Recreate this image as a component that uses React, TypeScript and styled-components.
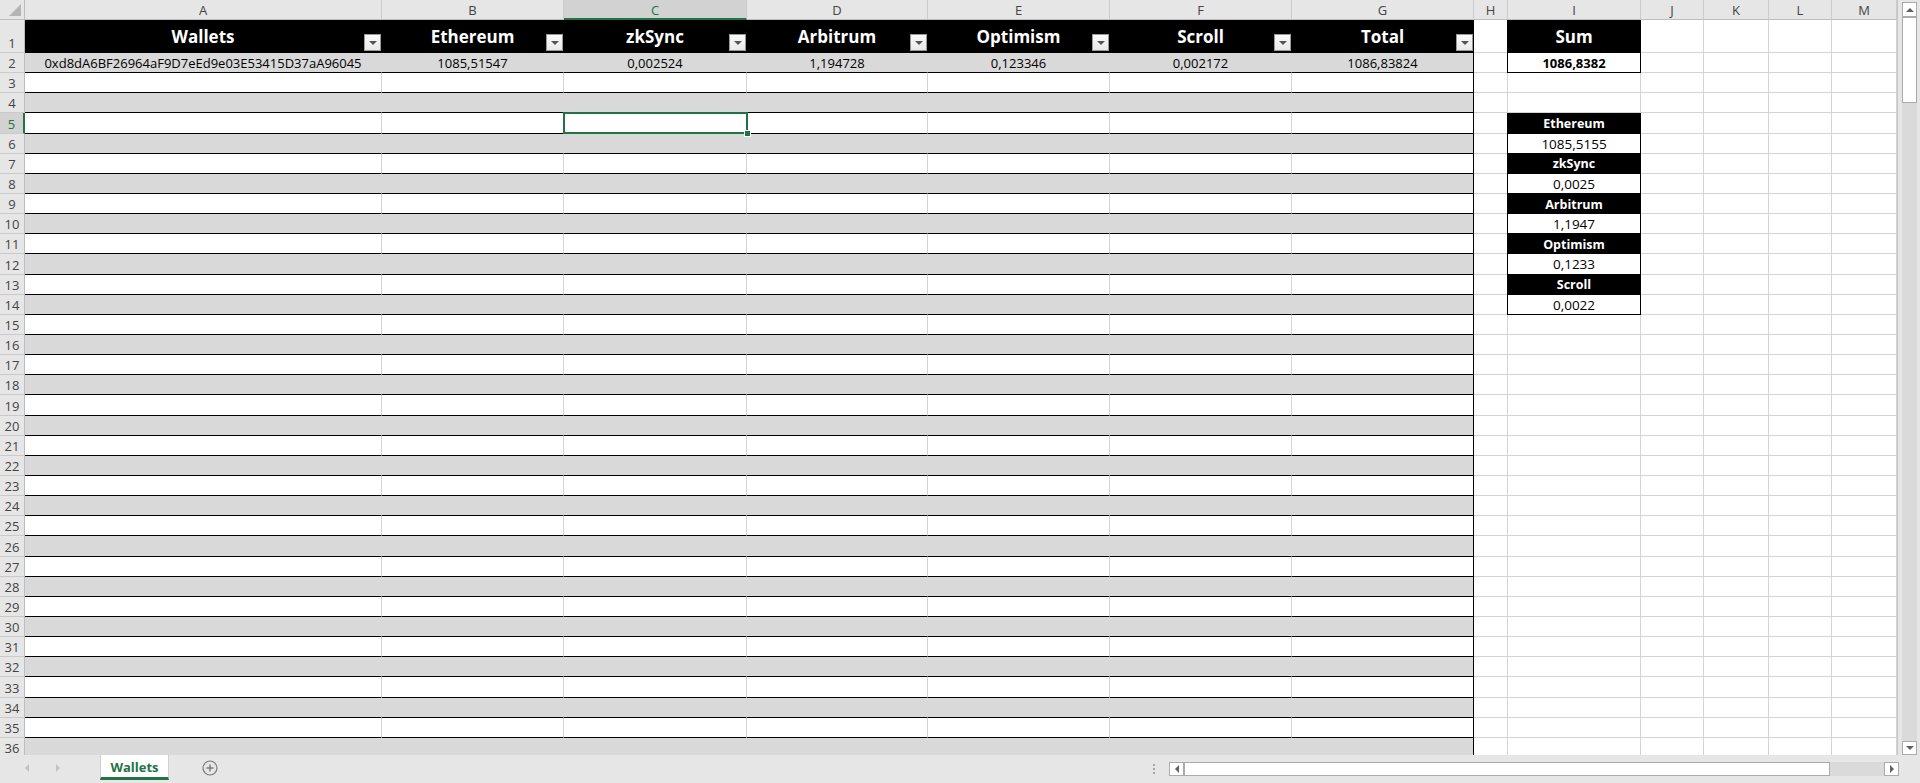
import React from "react";
import styled, { createGlobalStyle, css } from "styled-components";

const GREEN = "#217346";
const GRID = "#d4d4d4";
const BAND = "#d9d9d9";
const CHROME = "#e6e6e6";
const EDGE = "#ababab";

// column widths A..M, taken from the screenshot
const COL_WIDTHS = [357, 182, 183, 181, 182, 182, 182, 34, 133, 63, 65, 63, 65];
const LETTERS = ["A", "B", "C", "D", "E", "F", "G", "H", "I", "J", "K", "L", "M"];

const HEADERS = ["Wallets", "Ethereum", "zkSync", "Arbitrum", "Optimism", "Scroll", "Total"];
const FIRST_ROW = [
  "0xd8dA6BF26964aF9D7eEd9e03E53415D37aA96045",
  "1085,51547",
  "0,002524",
  "1,194728",
  "0,123346",
  "0,002172",
  "1086,83824",
];
const SUMMARY = [
  { name: "Ethereum", value: "1085,5155" },
  { name: "zkSync", value: "0,0025" },
  { name: "Arbitrum", value: "1,1947" },
  { name: "Optimism", value: "0,1233" },
  { name: "Scroll", value: "0,0022" },
];

const GlobalStyle = createGlobalStyle`
  html, body {
    margin: 0;
    padding: 0;
    overflow: hidden;
  }
  body {
    font-family: "Open Sans", "Liberation Sans", sans-serif;
    color: #000;
  }
  * {
    box-sizing: border-box;
  }
`;

const Window = styled.div`
  width: 1920px;
  height: 783px;
  display: flex;
  flex-direction: column;
  background: ${CHROME};
  overflow: hidden;
`;

const Main = styled.div`
  display: flex;
  height: 755px;
`;

const Sheet = styled.div`
  width: 1898px;
  height: 755px;
  overflow: hidden;
  display: grid;
  grid-template-columns: 25px ${COL_WIDTHS.map((w) => `${w}px`).join(" ")};
  grid-template-rows: 20px 33px;
  grid-auto-rows: 20.15px;
  border-right: 1px solid #c6c6c6;
  background: #fff;
  font-size: 13px;
`;

const Corner = styled.div`
  position: relative;
  background: ${CHROME};
  border-right: 1px solid #bdbdbd;
  border-bottom: 1px solid #bdbdbd;
`;

const CornerMark = styled.span`
  position: absolute;
  right: 3px;
  bottom: 3px;
  width: 12px;
  height: 12px;
  background: #b4b4b4;
  clip-path: polygon(100% 0, 100% 100%, 0 100%);
`;

const ColHead = styled.div<{ $active?: boolean }>`
  display: flex;
  align-items: center;
  justify-content: center;
  padding-top: 1px;
  background: ${(p) => (p.$active ? "#d2d2d2" : CHROME)};
  color: ${(p) => (p.$active ? GREEN : "#444")};
  border-right: 1px solid #cacaca;
  border-bottom: ${(p) => (p.$active ? `2px solid ${GREEN}` : "1px solid #bdbdbd")};
  font-size: 13px;
`;

const RowHead = styled.div<{ $active?: boolean }>`
  display: flex;
  align-items: flex-end;
  justify-content: center;
  padding-bottom: 0;
  background: ${(p) => (p.$active ? "#d2d2d2" : CHROME)};
  color: ${(p) => (p.$active ? GREEN : "#444")};
  border-right: ${(p) => (p.$active ? `2px solid ${GREEN}` : "1px solid #bdbdbd")};
  border-bottom: 1px solid #cacaca;
  font-size: 13px;
  line-height: 18px;
`;

const Cell = styled.div`
  position: relative;
  display: flex;
  align-items: center;
  justify-content: center;
  padding-top: 1px;
  white-space: nowrap;
  border-right: 1px solid ${GRID};
  border-bottom: 1px solid ${GRID};
  font-size: 13px;
`;

const HeadCell = styled(Cell)`
  background: #000;
  color: #fff;
  font-weight: 700;
  font-size: 17px;
  border-right-color: #000;
  border-bottom-color: #000;
`;

const BodyCell = styled(Cell)<{ $shaded: boolean; $edge: boolean; $selected?: boolean }>`
  background: ${(p) => (p.$shaded ? BAND : "#fff")};
  border-bottom-color: #000;
  border-right-color: ${(p) => (p.$edge ? "#000" : p.$shaded ? BAND : GRID)};
  ${(p) =>
    p.$selected &&
    css`
      z-index: 2;
    `}
`;

const SumHead = styled(Cell)<{ $large?: boolean }>`
  background: #000;
  color: #fff;
  font-weight: 700;
  font-size: ${(p) => (p.$large ? "17px" : "12.5px")};
  border-right-color: #000;
  border-bottom-color: #000;
  box-shadow: -1px 0 0 #000;
`;

const SumValue = styled(Cell)<{ $bold?: boolean }>`
  background: #fff;
  font-weight: ${(p) => (p.$bold ? 700 : 400)};
  font-size: ${(p) => (p.$bold ? "13px" : "13.5px")};
  border-right-color: #000;
  border-bottom-color: #000;
  box-shadow: -1px 0 0 #000;
`;

const FilterButton = styled.span`
  position: absolute;
  right: 0;
  bottom: 1px;
  width: 17px;
  height: 17px;
  display: flex;
  align-items: center;
  justify-content: center;
  background: linear-gradient(#fafafa, #e9e9e9);
  border: 1px solid #9a9a9a;
`;

const Selection = styled.span`
  position: absolute;
  top: -1px;
  left: -1px;
  right: -2px;
  bottom: -1px;
  border: 2px solid ${GREEN};
  pointer-events: none;
`;

const FillHandle = styled.span`
  position: absolute;
  right: -5px;
  bottom: -5px;
  width: 7px;
  height: 7px;
  background: ${GREEN};
  border: 1px solid #fff;
`;

type Dir = "up" | "down" | "left" | "right";

const Triangle = styled.span<{ $dir: Dir; $size?: number; $color?: string }>`
  display: inline-block;
  width: 0;
  height: 0;
  ${({ $dir, $size = 4, $color = "#606060" }) => {
    const t = `${$size}px solid transparent`;
    const c = `${$size}px solid ${$color}`;
    switch ($dir) {
      case "up":
        return css`border-left: ${t}; border-right: ${t}; border-bottom: ${c};`;
      case "down":
        return css`border-left: ${t}; border-right: ${t}; border-top: ${c};`;
      case "left":
        return css`border-top: ${t}; border-bottom: ${t}; border-right: ${c};`;
      default:
        return css`border-top: ${t}; border-bottom: ${t}; border-left: ${c};`;
    }
  }}
`;

/* vertical scrollbar */

const VScroll = styled.div`
  width: 22px;
  padding: 2px 3px 0 4px;
  display: flex;
  flex-direction: column;
`;

const ScrollBox = styled.div<{ $size: number }>`
  flex: 0 0 ${(p) => p.$size}px;
  display: flex;
  align-items: center;
  justify-content: center;
  background: #fff;
  border: 1px solid ${EDGE};
`;

const ScrollTrack = styled.div`
  flex: 1;
  background: #dadada;
`;

/* sheet tabs + horizontal scrollbar */

const TabBar = styled.div`
  display: flex;
  align-items: flex-start;
  height: 28px;
  background: ${CHROME};
`;

const NavArrows = styled.div`
  width: 100px;
  height: 25px;
  display: flex;
  align-items: center;
  gap: 27px;
  padding-left: 25px;
`;

const SheetTab = styled.div`
  width: 69px;
  height: 25px;
  display: flex;
  align-items: center;
  justify-content: center;
  padding-top: 1px;
  background: #fff;
  color: ${GREEN};
  font-weight: 700;
  font-size: 13px;
  border-left: 1px solid #d0d0d0;
  border-right: 1px solid #d0d0d0;
  border-bottom: 3px solid ${GREEN};
`;

const AddSheet = styled.span`
  margin: 5px 0 0 33px;
  width: 16px;
  height: 16px;
  display: flex;
`;

const Spacer = styled.div`
  flex: 1;
`;

const Splitter = styled.div`
  margin: 9px 14px 0 0;
  display: flex;
  flex-direction: column;
  gap: 2px;
`;

const Dot = styled.span`
  width: 2px;
  height: 2px;
  background: #a6a6a6;
`;

const HScroll = styled.div`
  width: 730px;
  height: 14px;
  margin: 7px 21px 0 0;
  display: flex;
  background: #dadada;
`;

const HThumb = styled.div`
  width: 646px;
  background: #fff;
  border: 1px solid ${EDGE};
`;

function renderCell(row: number, col: number) {
  const key = `${row}-${col}`;

  if (col < 7) {
    if (row === 1) {
      return (
        <HeadCell key={key}>
          {HEADERS[col]}
          <FilterButton>
            <Triangle $dir="down" $size={4} $color="#555" />
          </FilterButton>
        </HeadCell>
      );
    }
    const selected = row === 5 && col === 2;
    return (
      <BodyCell key={key} $shaded={row % 2 === 0} $edge={col === 6} $selected={selected}>
        {row === 2 ? FIRST_ROW[col] : null}
        {selected && (
          <Selection>
            <FillHandle />
          </Selection>
        )}
      </BodyCell>
    );
  }

  if (col === 8) {
    if (row === 1) return <SumHead key={key} $large>Sum</SumHead>;
    if (row === 2) return <SumValue key={key} $bold>1086,8382</SumValue>;
    if (row >= 5 && row <= 14) {
      const item = SUMMARY[Math.floor((row - 5) / 2)];
      return row % 2 === 1 ? (
        <SumHead key={key}>{item.name}</SumHead>
      ) : (
        <SumValue key={key}>{item.value}</SumValue>
      );
    }
  }

  return <Cell key={key} />;
}

function App() {
  const cells: React.ReactNode[] = [
    <Corner key="corner">
      <CornerMark />
    </Corner>,
  ];
  LETTERS.forEach((letter, i) =>
    cells.push(
      <ColHead key={letter} $active={i === 2}>
        {letter}
      </ColHead>
    )
  );
  for (let row = 1; row <= 36; row++) {
    cells.push(
      <RowHead key={`r${row}`} $active={row === 5}>
        {row}
      </RowHead>
    );
    for (let col = 0; col < LETTERS.length; col++) cells.push(renderCell(row, col));
  }

  return (
    <>
      <GlobalStyle />
      <Window>
        <Main>
          <Sheet>{cells}</Sheet>
          <VScroll>
            <ScrollBox $size={15}>
              <Triangle $dir="up" $size={4} />
            </ScrollBox>
            <ScrollBox $size={86} />
            <ScrollTrack />
            <ScrollBox $size={14}>
              <Triangle $dir="down" $size={4} />
            </ScrollBox>
          </VScroll>
        </Main>
        <TabBar>
          <NavArrows>
            <Triangle $dir="left" $size={4} $color="#c2c2c2" />
            <Triangle $dir="right" $size={4} $color="#c2c2c2" />
          </NavArrows>
          <SheetTab>Wallets</SheetTab>
          <AddSheet>
            <svg width="16" height="16" viewBox="0 0 16 16">
              <circle cx="8" cy="8" r="7" fill="none" stroke="#7a7a7a" strokeWidth="1.2" />
              <path d="M8 4.5v7M4.5 8h7" stroke="#7a7a7a" strokeWidth="1.4" />
            </svg>
          </AddSheet>
          <Spacer />
          <Splitter>
            <Dot />
            <Dot />
            <Dot />
          </Splitter>
          <HScroll>
            <ScrollBox $size={15}>
              <Triangle $dir="left" $size={4} />
            </ScrollBox>
            <HThumb />
            <Spacer />
            <ScrollBox $size={15}>
              <Triangle $dir="right" $size={4} />
            </ScrollBox>
          </HScroll>
        </TabBar>
      </Window>
    </>
  );
}

export default App;
